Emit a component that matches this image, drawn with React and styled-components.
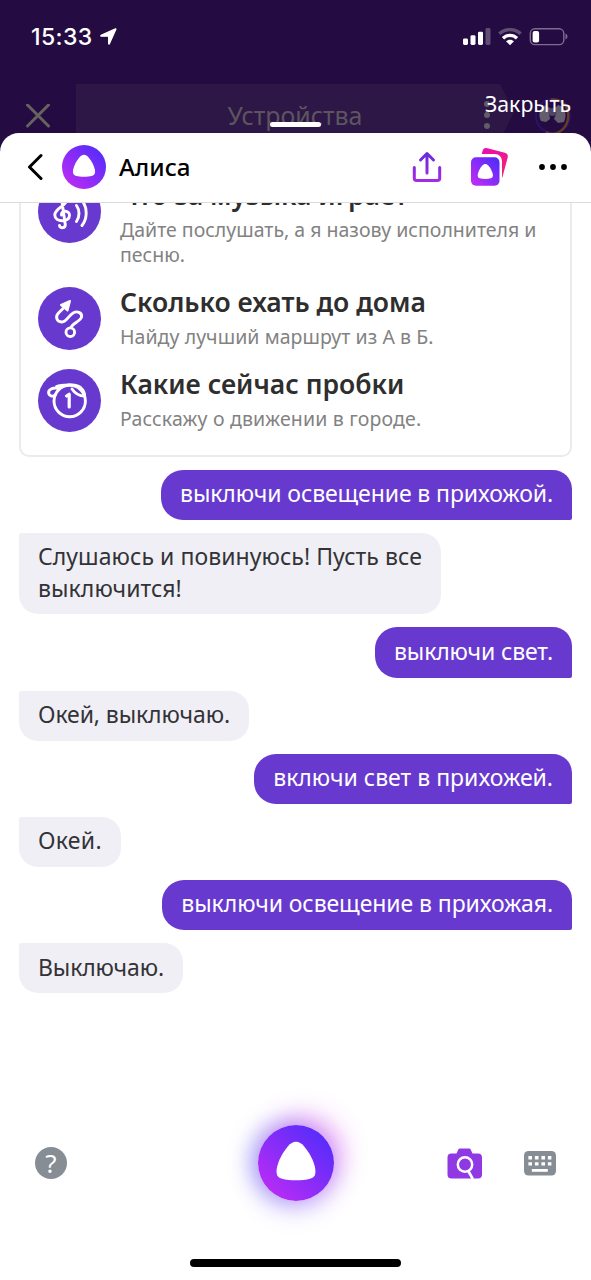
import styled, { createGlobalStyle } from "styled-components";

const suggestions = [
  {
    icon: "music",
    title: "Что за музыка играет",
    text: "Дайте послушать, а я назову исполнителя и песню.",
  },
  {
    icon: "route",
    title: "Сколько ехать до дома",
    text: "Найду лучший маршрут из А в Б.",
    spacing: 0.06,
  },
  {
    icon: "traffic",
    title: "Какие сейчас пробки",
    text: "Расскажу о движении в городе.",
    spacing: 0.17,
  },
];

const messages = [
  { mine: true, text: "выключи освещение в прихожой.", spacing: -0.1 },
  { text: "Слушаюсь и повинуюсь! Пусть все выключится!", spacing: 0.06 },
  { mine: true, text: "выключи свет.", spacing: -0.14 },
  { text: "Окей, выключаю.", spacing: -0.1 },
  { mine: true, text: "включи свет в прихожей.", spacing: 0 },
  { text: "Окей.", spacing: 0.3 },
  { mine: true, text: "выключи освещение в прихожая.", spacing: -0.08 },
  { text: "Выключаю.", spacing: -0.13 },
];

const AliceShape = (props) => (
  <path
    fill="#fff"
    d="M0-21.3C3-21.3 5.4-19.8 8.2-16.6C13-11 17.9-2.4 19.2 5.4C20 11.4 18.8 14 14.6 15.4C10 16.9 5 17.3 0 17.3C-5 17.3-10 16.9-14.6 15.4C-18.8 14-20 11.4-19.2 5.4C-17.9-2.4-13-11-8.2-16.6C-5.4-19.8-3-21.3 0-21.3Z"
    {...props}
  />
);

const SuggestIcon = ({ name }) => {
  if (name === "music") {
    return (
      <svg viewBox="0 0 63 63">
        <path d="M21.500 45.500c.5 3.500 6.300 2.800 5.700-1.500L24 22c-.5-5 5-5.500 4.300-1C27.500 26.500 16.800 28 16.800 35c0 7.500 14.700 7.800 14.700.5 0-5.500-8.500-5.500-8-.5" />
        <path d="M38.500 25.500c3.300 4.500 3.300 11.500 0 16M44 20.500c5.600 7 5.600 18 0 25" />
      </svg>
    );
  }
  if (name === "route") {
    return (
      <svg viewBox="0 0 63 63">
        <circle cx="32.300" cy="45.200" r="4.300" />
        <path d="M33 40.500c1.500-4 9.500-6.300 10.500-10.500 1-4-4-6.300-8-4.300-4.500 2.200-6.500 9-11.500 9.300-5.500.2-7-5.500-3.500-9l6-6" />
        <path d="M32 14l-9 4 6.500 5.500z" fill="#fff" strokeWidth="2" />
      </svg>
    );
  }
  return (
    <svg viewBox="0 0 63 63">
      <circle cx="31.700" cy="32" r="15.700" />
      <path d="M17.500 26c-3 2-6 1-6.700-1.200C9.500 20.500 15 18 21 19.500M18.500 17.500c4-1.800 19-3 24 1 3 2.600 4.300 5.500 4 8.500-5 0-9.500-2.500-12.500-7" />
      <path d="M28.500 27l2.700-1.700V38" strokeWidth="3.200" />
    </svg>
  );
};

export default function App() {
  return (
    <Screen>
      <GlobalStyle />
      <StatusBar>
        <Clock>15:33</Clock>
        <svg width="17" height="17" viewBox="0 0 17 17">
          <path
            d="M15.500.9L1 7.400c-.5.300-.4.800.2.800h7.400v7.400c0 .6.600.7.800.2L15.900 1.300c.1-.3-.1-.5-.4-.4z"
            fill="#fff"
            stroke="#fff"
            strokeWidth="1.200"
            strokeLinejoin="round"
          />
        </svg>
        <StatusIcons>
          <svg width="28" height="18" viewBox="0 0 28 18">
            <g fill="#fff">
              <rect y="10.500" width="5" height="6.500" rx="1.400" />
              <rect x="7.500" y="7.200" width="5" height="9.800" rx="1.400" />
              <rect x="15" y="3.700" width="5" height="13.300" rx="1.400" />
              <rect x="22.500" width="5" height="17" rx="1.400" opacity=".27" />
            </g>
          </svg>
          <svg width="24" height="18" viewBox="0 0 24 18">
            <g fill="none" stroke="#fff" strokeWidth="3.300">
              <path d="M1.300 5.800c6-5.700 15.400-5.700 21.400 0" opacity=".27" />
              <path d="M5 10.200c4-3.900 10-3.900 14 0" />
            </g>
            <path d="M12 17.300l-4-4c2.200-2.100 5.800-2.100 8 0z" fill="#fff" />
          </svg>
          <svg width="39" height="18" viewBox="0 0 39 18">
            <rect x="1.300" y=".8" width="33.500" height="15.800" rx="4.600" fill="none" stroke="#7d6d91" strokeWidth="1.400" />
            <rect x="3.600" y="3" width="6.500" height="11.400" rx="2" fill="#fff" />
            <path d="M36.500 5.600v6c2.600-1 2.600-5 0-6z" fill="#7d6d91" />
          </svg>
        </StatusIcons>
      </StatusBar>
      <Navbar>
        <svg width="24" height="24" viewBox="0 0 24 24">
          <path d="M1.500 1l21 21M22.500 1l-21 21" stroke="#67625f" strokeWidth="3" strokeLinecap="round" />
        </svg>
        <Tab>Устройства</Tab>
        <svg width="38" height="38" viewBox="0 0 38 38">
          <circle cx="19" cy="19" r="17" fill="none" stroke="#2b1266" strokeWidth="2" />
          <path d="M17 2.500c20-2 23 26 7 33-4 1.700-9 1.500-12-.5" fill="none" stroke="#693b25" strokeWidth="2.400" />
          <path d="M12 8c-7 3-8 10-5 16l5 1 4-3-1-6 3-3zM24 8c8 2 9 10 6 17l-6 1-4-4 2-5-3-4z" fill="#635d6e" />
          <circle cx="18.500" cy="15" r="4" fill="#514561" />
        </svg>
        <MenuDots>
          <i />
          <i />
          <i />
        </MenuDots>
        <CloseLabel>Закрыть</CloseLabel>
        <Handle />
      </Navbar>
      <Sheet>
        <Header>
          <svg width="16" height="28" viewBox="0 0 16 28">
            <path d="M14 2.500L2.500 14 14 25.500" fill="none" stroke="#000" strokeWidth="3" strokeLinecap="round" strokeLinejoin="round" />
          </svg>
          <Logo width="44" height="44" viewBox="-22 -22 44 44">
            <defs>
              <linearGradient id="alice" x1="0.150" y1="0.900" x2="0.850" y2="0.150">
                <stop offset="0" stopColor="#b82cf5" />
                <stop offset="1" stopColor="#5a2cfa" />
              </linearGradient>
            </defs>
            <circle r="22" fill="url(#alice)" />
            <AliceShape transform="scale(.57)" />
          </Logo>
          <Name>Алиса</Name>
          <HeaderIcons>
            <svg width="30" height="32" viewBox="0 0 30 32">
              <defs>
                <linearGradient id="share" gradientUnits="userSpaceOnUse" x1="15" y1="1" x2="15" y2="31">
                  <stop offset="0" stopColor="#632bdd" />
                  <stop offset="1" stopColor="#a52ce6" />
                </linearGradient>
              </defs>
              <path d="M2.300 16.500v10.700c0 1.600.7 2.300 2.300 2.300h20.800c1.600 0 2.300-.7 2.300-2.300V16.500M15 22V2.500M8.500 9L15 2.500 21.500 9" fill="none" stroke="url(#share)" strokeWidth="3" strokeLinecap="round" strokeLinejoin="round" />
            </svg>
            <svg width="40" height="40" viewBox="0 0 40 40">
              <defs>
                <linearGradient id="pink" x1="0" y1="0" x2="1" y2="1">
                  <stop offset="0" stopColor="#e80cb4" />
                  <stop offset="1" stopColor="#f52569" />
                </linearGradient>
              </defs>
              <rect x="9.500" y="3" width="26" height="28" rx="4" fill="url(#pink)" transform="rotate(15 22.500 17)" />
              <rect x="-2" y="7" width="34" height="36" rx="7" fill="#fff" />
              <rect x="1" y="10.200" width="28.500" height="28.500" rx="5" fill="url(#alice)" />
              <AliceShape transform="translate(15.300 25.200) scale(.39)" />
            </svg>
            <svg width="30" height="8" viewBox="0 0 30 8">
              <circle cx="4" cy="4" r="2.900" />
              <circle cx="15" cy="4" r="2.900" />
              <circle cx="26" cy="4" r="2.900" />
            </svg>
          </HeaderIcons>
        </Header>
        <Chat>
          <Card>
            {suggestions.map((item) => (
              <Suggestion key={item.icon}>
                <SuggestBadge>
                  <SuggestIcon name={item.icon} />
                </SuggestBadge>
                <div>
                  <SuggestTitle>{item.title}</SuggestTitle>
                  <SuggestText $spacing={item.spacing}>{item.text}</SuggestText>
                </div>
              </Suggestion>
            ))}
          </Card>
          {messages.map((message) => (
            <Bubble
              key={message.text}
              $mine={message.mine}
              $spacing={message.spacing}
            >
              {message.text}
            </Bubble>
          ))}
        </Chat>
        <Toolbar>
          <Help>?</Help>
          <VoiceButton>
            <svg width="76" height="76" viewBox="-38 -38 76 76">
              <circle r="38" fill="url(#alice)" />
              <AliceShape />
            </svg>
          </VoiceButton>
          <ToolbarRight>
            <svg width="36" height="32" viewBox="0 0 36 32">
              <path d="M4.500 6.500h5l1.800-4c.3-.7.8-1 1.500-1h9.400c.7 0 1.200.3 1.500 1l1.800 4h5.500c2.700 0 4 1.300 4 4v17c0 2.700-1.300 4-4 4H4.500c-2.700 0-4-1.300-4-4v-17c0-2.700 1.300-4 4-4z" fill="#9038e4" />
              <circle cx="18" cy="17.500" r="7.200" fill="none" stroke="#fff" strokeWidth="2.500" />
              <path d="M21.300 24l4.500 8" stroke="#fff" strokeWidth="2.700" />
            </svg>
            <svg width="32" height="25" viewBox="0 0 32 25">
              <rect width="32" height="24.500" rx="4.500" fill="#868d94" />
              <path d="M4.400 6.700h23M4.400 12.900h23" stroke="#fff" strokeWidth="3.400" strokeDasharray="3.600 2.900" />
              <path d="M7.800 19.400h16" stroke="#fff" strokeWidth="2.800" />
            </svg>
          </ToolbarRight>
        </Toolbar>
        <HomeIndicator />
      </Sheet>
    </Screen>
  );
}

const GlobalStyle = createGlobalStyle`
  * {
    box-sizing: border-box;
  }
  body {
    margin: 0;
    font-family: "Noto Sans", sans-serif;
  }
  svg {
    display: block;
    flex-shrink: 0;
  }
`;

const Screen = styled.div`
  width: 591px;
  height: 1280px;
  display: flex;
  flex-direction: column;
  overflow: hidden;
  background: #240b41;
`;

const StatusBar = styled.div`
  height: 84px;
  padding: 28px 23px 39px 31px;
  display: flex;
  gap: 6px;
  flex-shrink: 0;
`;

const Clock = styled.div`
  width: 63px;
  font-family: "Inter", sans-serif;
  font-size: 23px;
  font-weight: 550;
  line-height: 18px;
  letter-spacing: 0.4px;
  color: #fff;
`;

const StatusIcons = styled.div`
  margin-left: auto;
  display: flex;
  gap: 7px;
`;

const Navbar = styled.div`
  position: relative;
  height: 64px;
  padding-left: 26px;
  display: flex;
  align-items: center;
  flex-shrink: 0;
`;

const Tab = styled.div`
  width: 438px;
  height: 64px;
  margin: 0 20px 0 26px;
  padding-bottom: 2px;
  display: flex;
  align-items: center;
  justify-content: center;
  background: #2d1747;
  clip-path: polygon(0 0, 424px 0, 438px 28px, 424px 56px, 424px 64px, 0 64px);
  font-size: 24.9px;
  color: #5e545f;
`;

const MenuDots = styled.div`
  position: absolute;
  left: 484px;
  top: 17px;
  display: grid;
  gap: 5px;
  i {
    width: 6px;
    height: 6px;
    border-radius: 50%;
    background: #635b66;
  }
`;

const CloseLabel = styled.div`
  position: absolute;
  right: 20px;
  top: 5px;
  font-size: 21.3px;
  line-height: 30px;
  color: #fff;
`;

const Handle = styled.div`
  position: absolute;
  left: 270px;
  top: 38px;
  width: 51px;
  height: 5px;
  border-radius: 3px;
  background: #fff;
`;

const Sheet = styled.div`
  position: relative;
  flex: 1;
  min-height: 0;
  margin-top: -15.5px;
  display: flex;
  flex-direction: column;
  border-radius: 19px 19px 0 0;
  background: #fff;
`;

const Header = styled.div`
  height: 70px;
  padding: 0 23px 0 27px;
  display: flex;
  align-items: center;
  flex-shrink: 0;
  border-bottom: 1.5px solid #dcdcdc;
`;

const Logo = styled.svg`
  margin: 0 13px 0 19px;
`;

const Name = styled.div`
  font-size: 24.2px;
  font-weight: 500;
  line-height: 30px;
  color: #000;
`;

const HeaderIcons = styled.div`
  margin-left: auto;
  display: flex;
  align-items: center;
  gap: 28px;
`;

const Chat = styled.div`
  flex: 1;
  min-height: 0;
  padding: 0 19px 110px;
  display: flex;
  flex-direction: column;
  justify-content: flex-end;
  gap: 13px;
  overflow: hidden;
`;

const Card = styled.div`
  padding: 20px 17px 22.8px;
  display: grid;
  gap: 19px;
  flex-shrink: 0;
  border: 2px solid #ebebeb;
  border-radius: 10px;
`;

const Suggestion = styled.div`
  min-height: 63px;
  display: flex;
  gap: 19px;
`;

const SuggestBadge = styled.div`
  width: 63px;
  height: 63px;
  flex-shrink: 0;
  border-radius: 50%;
  background: #6839cf;
  svg {
    fill: none;
    stroke: #fff;
    stroke-width: 2.9;
    stroke-linecap: round;
    stroke-linejoin: round;
  }
`;

const SuggestTitle = styled.div`
  margin-bottom: 6.8px;
  font-size: 26.5px;
  font-weight: 600;
  line-height: 30px;
  color: #2e2e2e;
`;

const SuggestText = styled.div`
  font-size: 19.5px;
  line-height: 25.5px;
  letter-spacing: ${(p) => p.$spacing || 0}px;
  color: #828282;
`;

const Bubble = styled.div`
  max-width: 422px;
  padding: 8.6px 19px 10px;
  flex-shrink: 0;
  align-self: ${(p) => (p.$mine ? "flex-end" : "flex-start")};
  border-radius: ${(p) =>
    p.$mine ? "22px 19px 2px 22px" : "2px 19px 19px 19px"};
  background: ${(p) => (p.$mine ? "#6839cf" : "#f0eff5")};
  font-size: 23px;
  line-height: 31.5px;
  letter-spacing: ${(p) => p.$spacing}px;
  color: ${(p) => (p.$mine ? "#fff" : "#333337")};
`;

const Toolbar = styled.div`
  height: 120px;
  padding: 0 35px;
  display: grid;
  grid-template-columns: 1fr 76px 1fr;
  align-items: center;
  flex-shrink: 0;
`;

const Help = styled.div`
  width: 32px;
  height: 32px;
  border-radius: 50%;
  background: #868d94;
  font-size: 26px;
  line-height: 32px;
  text-align: center;
  color: #fff;
`;

const VoiceButton = styled.div`
  border-radius: 50%;
  box-shadow:
    8px -9px 26px rgba(214, 60, 235, 0.42),
    -8px -3px 22px rgba(70, 90, 235, 0.36),
    -1px 8px 26px rgba(110, 60, 250, 0.3);
`;

const ToolbarRight = styled.div`
  display: flex;
  align-items: center;
  justify-content: flex-end;
  gap: 41px;
`;

const HomeIndicator = styled.div`
  width: 211px;
  height: 8px;
  margin: 36px auto 13px;
  flex-shrink: 0;
  border-radius: 4px;
  background: #000;
`;
